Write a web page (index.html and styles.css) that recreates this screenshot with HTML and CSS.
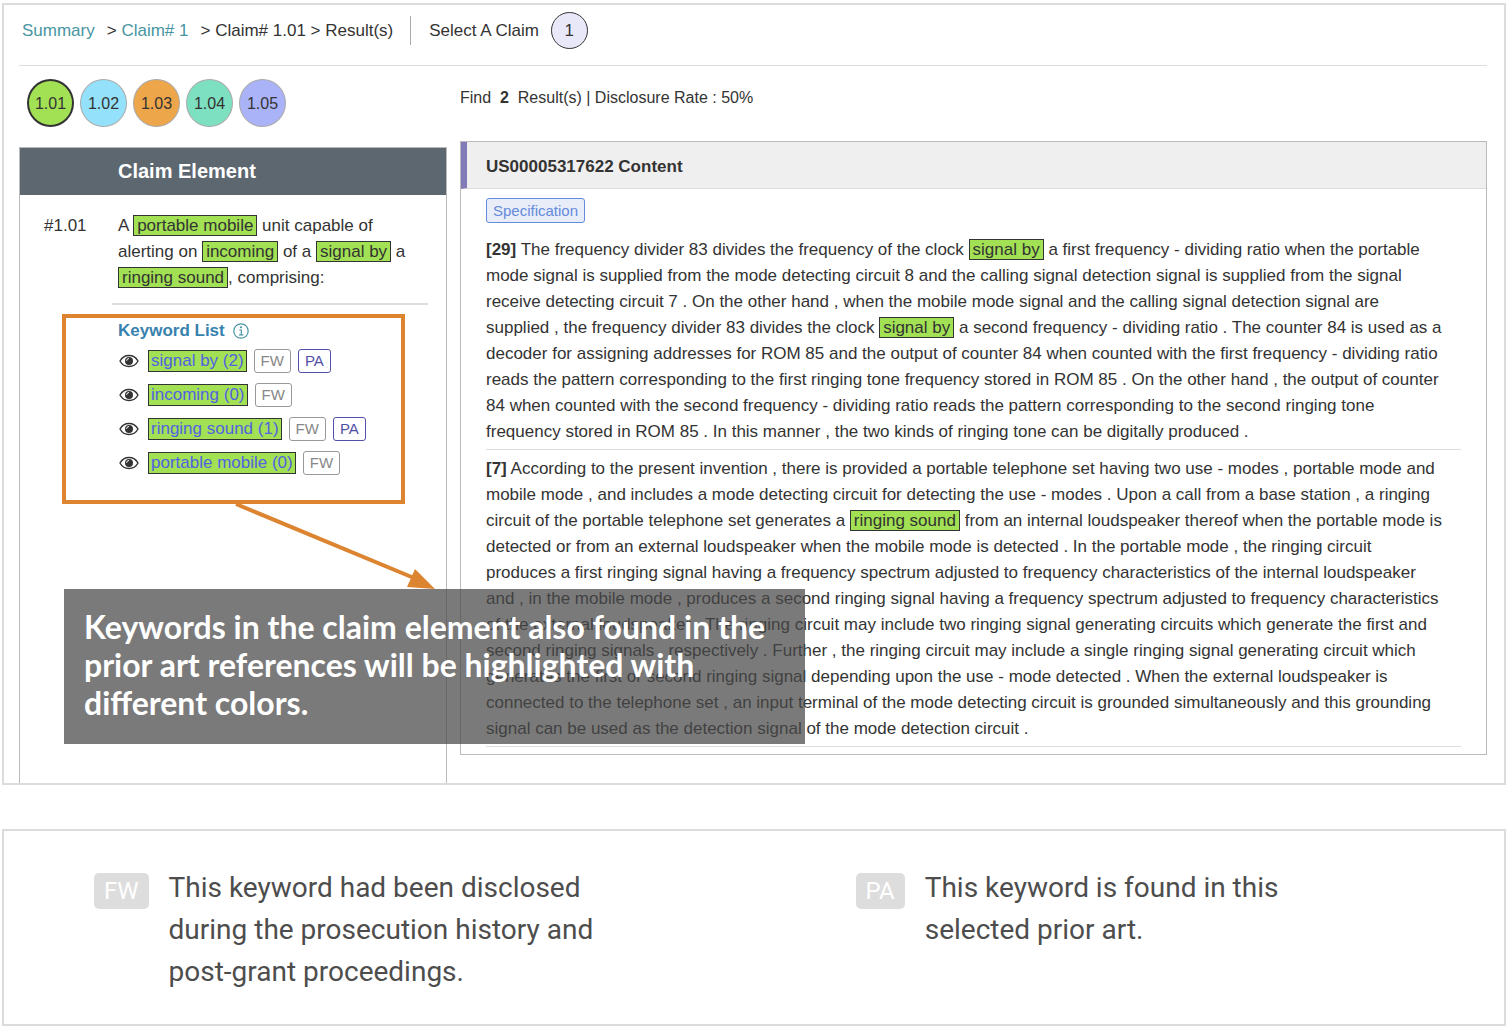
FILE: index.html
```html
<!DOCTYPE html>
<html lang="en">
<head>
<meta charset="utf-8">
<title>Claim search results</title>
<link rel="stylesheet" href="styles.css">
</head>
<body>
<main class="frame">
  <header class="topbar">
    <nav class="crumbs" aria-label="Breadcrumb">
      <a href="#summary">Summary</a>
      <span class="crumb-sep">&gt; <a href="#claim-1">Claim# 1</a></span>
      <span class="crumb-sep">&gt; Claim# 1.01 &gt; Result(s)</span>
    </nav>
    <div class="picker">
      <span>Select A Claim</span>
      <button type="button" class="pick">1</button>
    </div>
  </header>

  <div class="columns">
    <section class="left">
      <div class="dots">
        <button type="button" class="dot dot-green">1.01</button>
        <button type="button" class="dot dot-blue">1.02</button>
        <button type="button" class="dot dot-orange">1.03</button>
        <button type="button" class="dot dot-teal">1.04</button>
        <button type="button" class="dot dot-violet">1.05</button>
      </div>
      <div class="element">
        <h2 class="element-head">Claim Element</h2>
        <div class="element-row">
          <span class="element-no">#1.01</span>
          <div class="element-body">
            <p class="claim">A <mark>portable mobile</mark> unit capable of<br>alerting on <mark>incoming</mark> of a <mark>signal by</mark> a<br><mark>ringing sound</mark>, comprising:</p>
            <div class="keywords">
              <h3 class="keywords-title">Keyword List
                <svg class="info" viewBox="0 0 16 16" aria-hidden="true"><circle cx="8" cy="8" r="7.2"/><path d="M6.3 7h2v4.6M6 11.8h4.4"/><circle class="fill" cx="8" cy="4.3" r="1.1"/></svg>
              </h3>
              <ul class="keyword-list">
                <li><svg class="eye" viewBox="0 0 20 14" aria-hidden="true"><path d="M1 7C5-.4 15-.4 19 7 15 14.4 5 14.4 1 7z"/><circle class="fill" cx="10" cy="7" r="4"/><path class="glint" d="M7.6 6.8A2.4 2.4 0 0 1 10 4.5"/></svg><a href="#signal-by" class="hit">signal by (2)</a><span class="tag">FW</span><span class="tag tag-pa">PA</span></li>
                <li><svg class="eye" viewBox="0 0 20 14" aria-hidden="true"><path d="M1 7C5-.4 15-.4 19 7 15 14.4 5 14.4 1 7z"/><circle class="fill" cx="10" cy="7" r="4"/><path class="glint" d="M7.6 6.8A2.4 2.4 0 0 1 10 4.5"/></svg><a href="#incoming" class="hit">incoming (0)</a><span class="tag">FW</span></li>
                <li><svg class="eye" viewBox="0 0 20 14" aria-hidden="true"><path d="M1 7C5-.4 15-.4 19 7 15 14.4 5 14.4 1 7z"/><circle class="fill" cx="10" cy="7" r="4"/><path class="glint" d="M7.6 6.8A2.4 2.4 0 0 1 10 4.5"/></svg><a href="#ringing-sound" class="hit">ringing sound (1)</a><span class="tag">FW</span><span class="tag tag-pa">PA</span></li>
                <li><svg class="eye" viewBox="0 0 20 14" aria-hidden="true"><path d="M1 7C5-.4 15-.4 19 7 15 14.4 5 14.4 1 7z"/><circle class="fill" cx="10" cy="7" r="4"/><path class="glint" d="M7.6 6.8A2.4 2.4 0 0 1 10 4.5"/></svg><a href="#portable-mobile" class="hit">portable mobile (0)</a><span class="tag">FW</span></li>
              </ul>
            </div>
          </div>
        </div>
      </div>
    </section>

    <section class="right">
      <p class="summary">Find &nbsp;<b>2</b>&nbsp; Result(s) | Disclosure Rate : 50%</p>
      <article class="doc">
        <h2 class="doc-head">US00005317622 Content</h2>
        <div class="doc-body">
          <button type="button" class="spec">Specification</button>
          <p class="para"><b>[29]</b> The frequency divider 83 divides the frequency of the clock <mark>signal by</mark> a first frequency - dividing ratio when the portable<br>mode signal is supplied from the mode detecting circuit 8 and the calling signal detection signal is supplied from the signal<br>receive detecting circuit 7 . On the other hand , when the mobile mode signal and the calling signal detection signal are<br>supplied , the frequency divider 83 divides the clock <mark>signal by</mark> a second frequency - dividing ratio . The counter 84 is used as a<br>decoder for assigning addresses for ROM 85 and the output of counter 84 when counted with the first frequency - dividing ratio<br>reads the pattern corresponding to the first ringing tone frequency stored in ROM 85 . On the other hand , the output of counter<br>84 when counted with the second frequency - dividing ratio reads the pattern corresponding to the second ringing tone<br>frequency stored in ROM 85 . In this manner , the two kinds of ringing tone can be digitally produced .</p>
          <p class="para"><b>[7]</b> According to the present invention , there is provided a portable telephone set having two use - modes , portable mode and<br>mobile mode , and includes a mode detecting circuit for detecting the use - modes . Upon a call from a base station , a ringing<br>circuit of the portable telephone set generates a <mark>ringing sound</mark> from an internal loudspeaker thereof when the portable mode is<br>detected or from an external loudspeaker when the mobile mode is detected . In the portable mode , the ringing circuit<br>produces a first ringing signal having a frequency spectrum adjusted to frequency characteristics of the internal loudspeaker<br>and , in the mobile mode , produces a second ringing signal having a frequency spectrum adjusted to frequency characteristics<br>of the external loudspeaker . The ringing circuit may include two ringing signal generating circuits which generate the first and<br>second ringing signals , respectively . Further , the ringing circuit may include a single ringing signal generating circuit which<br>generates the first or second ringing signal depending upon the use - mode detected . When the external loudspeaker is<br>connected to the telephone set , an input terminal of the mode detecting circuit is grounded simultaneously and this grounding<br>signal can be used as the detection signal of the mode detection circuit .</p>
        </div>
      </article>
    </section>
  </div>

  <div class="spotlight"></div>
  <svg class="arrow" viewBox="0 0 210 90" aria-hidden="true"><path d="M4 2L182 76" stroke="#dc8430" stroke-width="4"/><path d="M183 67L203 87 175 85z" fill="#dc8430"/></svg>
  <p class="callout">Keywords in the claim element also found in the prior art references will be highlighted with different colors.</p>
</main>

<section class="legend">
  <div class="legend-item">
    <span class="legend-tag">FW</span>
    <p>This keyword had been disclosed<br>during the prosecution history and<br>post-grant proceedings.</p>
  </div>
  <div class="legend-item">
    <span class="legend-tag">PA</span>
    <p>This keyword is found in this<br>selected prior art.</p>
  </div>
</section>
</body>
</html>
```
FILE: styles.css
```css
* { box-sizing: border-box; }

body {
  margin: 0;
  padding: 3px 4px 4px 2px;
  background: #fff;
  color: #333;
  font-family: "Liberation Sans", Arial, sans-serif;
  font-size: 17px;
}

h2, h3, p, ul { margin: 0; padding: 0; }
button { font: inherit; color: inherit; padding: 0; }
a { text-decoration: none; }

.frame {
  position: relative;
  border: 2px solid #dcdcdc;
  padding: 0 17px 0 15px;
}

.topbar {
  display: flex;
  align-items: center;
  height: 61px;
  padding: 0 3px 9px;
  border-bottom: 1px solid #ddd;
}

.crumbs {
  display: flex;
  gap: 12px;
  align-items: center;
  white-space: nowrap;
}
.crumbs a { color: #4795a3; }

.picker {
  display: flex;
  align-items: center;
  gap: 12px;
  margin-left: 17px;
  padding-left: 19px;
  position: relative;
}
.picker::before {
  content: "";
  position: absolute;
  left: 0;
  top: 4px;
  height: 29px;
  border-left: 1px solid #aaa;
}
.pick {
  width: 37px;
  height: 37px;
  border: 1px solid #333;
  border-radius: 50%;
  background: #e9e8f8;
}

.columns { display: flex; gap: 13px; }

.left {
  width: 428px;
  flex: none;
  display: flex;
  flex-direction: column;
}

.dots {
  display: flex;
  gap: 6px;
  padding: 13px 8px 20px;
}
.dot {
  width: 47px;
  height: 48px;
  padding-top: 2px;
  border: 1px solid #aaa;
  border-radius: 50%;
  font-size: 16px;
}
.dot-green { background: #a2e154; border: 2px solid #333; }
.dot-blue { background: #94e1fb; }
.dot-orange { background: #eda64a; }
.dot-teal { background: #7de0c1; }
.dot-violet { background: #abb3f8; }

.element {
  flex: 1;
  border: 1px solid #bbb;
  border-bottom: 0;
}
.element-head {
  height: 47px;
  padding-left: 98px;
  background: #5d6770;
  color: #fff;
  font-size: 20px;
  line-height: 47px;
}
.element-row {
  display: flex;
  padding: 18px 18px 0 24px;
}
.element-no { width: 68px; line-height: 26px; }
.element-body { flex: 1; }
.claim {
  padding: 0 0 12px 6px;
  border-bottom: 2px solid #ddd;
  line-height: 26px;
  white-space: nowrap;
}

mark, .hit {
  background: #a2e154;
  border: 1px solid #333;
  color: inherit;
  padding: 0 3px;
}

.keywords { padding: 13px 0 0 6px; }
.keywords-title {
  display: flex;
  align-items: center;
  gap: 8px;
  color: #3782ae;
  font-size: 17px;
  line-height: 26px;
}
.info { width: 16px; height: 16px; fill: none; stroke: #4795a3; stroke-width: 1.2; }
.info .fill { fill: #4795a3; stroke: none; }

.keyword-list { list-style: none; }
.keyword-list li {
  display: flex;
  align-items: center;
  height: 33px;
}
.keyword-list li + li { margin-top: 1px; }
.eye { width: 20px; height: 14px; margin: 0 9px 0 1px; fill: none; stroke: #333; stroke-width: 1.4; }
.eye .fill { fill: #333; stroke: none; }
.eye .glint { stroke: #fff; stroke-width: 1; }
.hit { padding: 0 2px; color: #5262e0; line-height: 20px; }
.tag {
  margin-left: 7px;
  padding: 0 6px;
  border: 1px solid #999;
  border-radius: 3px;
  color: #888;
  font-size: 15px;
  line-height: 22px;
}
.tag-pa { border-color: #5250a8; color: #5250a8; }

.right { flex: 1; min-width: 0; padding-bottom: 28px; }
.summary { padding: 22px 0 34px; font-size: 16px; line-height: 19px; }

.doc { border: 1px solid #bbb; }
.doc-head {
  height: 47px;
  padding-left: 19px;
  border-left: 6px solid #817bb8;
  border-bottom: 1px solid #ddd;
  background: #efefef;
  font-size: 17px;
  line-height: 49px;
}
.doc-body { padding: 9px 25px 7px; }
.spec {
  display: block;
  height: 25px;
  margin-bottom: 8px;
  padding: 0 6px;
  border: 1px solid #648bdc;
  border-radius: 3px;
  background: #e8edf8;
  color: #648bdc;
  font-size: 15px;
}
.para {
  border-bottom: 1px solid #ddd;
  line-height: 26px;
  padding: 6px 0 4px;
  white-space: nowrap;
}

.spotlight {
  position: absolute;
  left: 58px;
  top: 309px;
  width: 343px;
  height: 190px;
  border: 4px solid #dc8430;
}
.arrow {
  position: absolute;
  left: 228px;
  top: 497px;
  width: 210px;
  height: 90px;
  fill: none;
}
.callout {
  position: absolute;
  left: 60px;
  top: 584px;
  width: 741px;
  padding: 19px 20px 22px;
  background: rgba(71, 71, 71, .72);
  color: #fff;
  font: bold 32px/38px Lato, sans-serif;
}

.legend {
  display: grid;
  grid-template-columns: 15fr 11fr;
  margin-top: 44px;
  padding: 36px 90px 31px;
  border: 2px solid #dcdcdc;
  color: #4d4d4d;
  font: 28px/42px Roboto, sans-serif;
}
.legend-item { display: flex; gap: 20px; }
.legend-tag {
  align-self: flex-start;
  margin-top: 6px;
  padding: 0 10px;
  border-radius: 5px;
  background: #ddd;
  color: #fff;
  font-size: 24px;
  line-height: 36px;
}
```
